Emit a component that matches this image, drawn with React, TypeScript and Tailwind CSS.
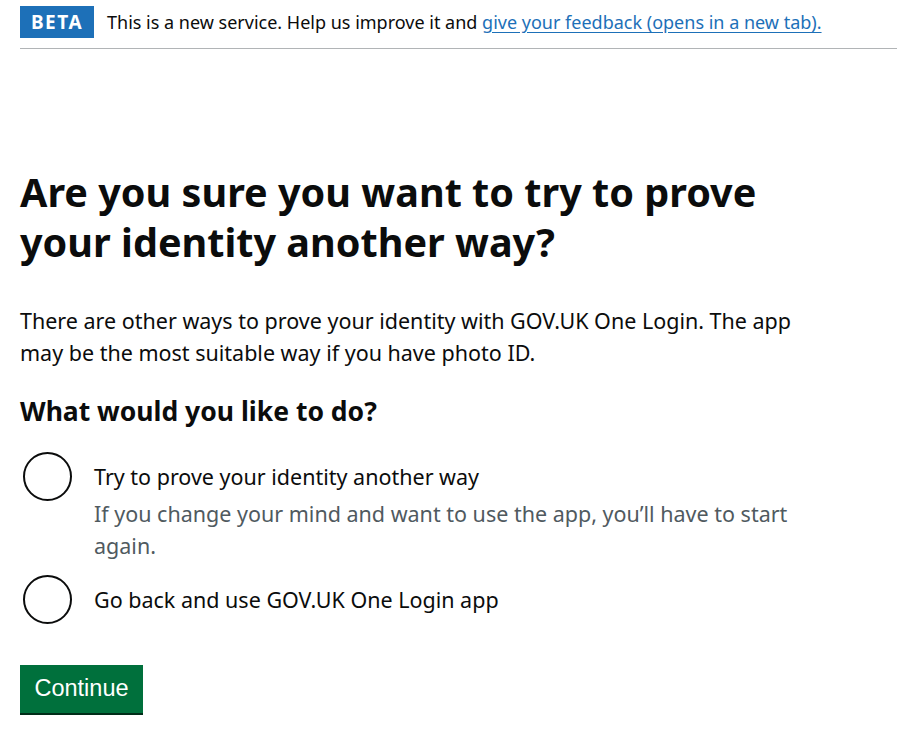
import React from 'react';

const font = { fontFamily: '"Noto Sans", Arial, sans-serif' };

function Radio({ label, hint }: { label: string; hint?: string }) {
  return (
    <div className="flex items-start">
      <span className="ml-[3px] h-[49px] w-[49px] shrink-0 rounded-full border-2 border-[#0b0c0c] bg-white" />
      <div className="ml-[22px] max-w-[700px] pt-[10px]">
        <div className="text-[21.5px] leading-[30px] text-[#0b0c0c]">{label}</div>
        {hint && <div className="mt-[6px] text-[21.5px] leading-[32px] text-[#505a5f]">{hint}</div>}
      </div>
    </div>
  );
}

export default function App() {
  return (
    <div className="min-h-[731px] bg-white text-[#0b0c0c]" style={font}>
      {/* Phase banner */}
      <div className="ml-[20px] flex items-center gap-[13px] border-b border-[#b1b4b6] pt-[6px] pb-[10px]">
        <strong className="flex h-[32px] w-[74px] items-center justify-center bg-[#1d70b8] text-[19px] font-bold tracking-[1.5px] text-white">
          BETA
        </strong>
        <p className="text-[18px] leading-[24px]">
          This is a new service. Help us improve it and{' '}
          <a href="#" className="text-[#1d70b8] underline underline-offset-[3px]">
            give your feedback (opens in a new tab).
          </a>
        </p>
      </div>

      <main className="px-[20px] pt-[118px]">
        <h1 className="max-w-[780px] text-[39.6px] font-bold leading-[50px]">
          Are you sure you want to try to prove your identity another way?
        </h1>
        <p className="mt-[38px] max-w-[800px] text-[21.5px] leading-[32px]">
          There are other ways to prove your identity with GOV.UK One Login. The app may be the most suitable way if
          you have photo ID.
        </p>

        <fieldset className="mt-[24px]">
          <legend className="text-[26.5px] font-bold leading-[36px]">What would you like to do?</legend>
          <div className="mt-[23px] flex flex-col gap-[13px]">
            <Radio
              label="Try to prove your identity another way"
              hint="If you change your mind and want to use the app, you’ll have to start again."
            />
            <Radio label="Go back and use GOV.UK One Login app" />
          </div>
        </fieldset>

        <button
          className="mt-[41px] block h-[48px] w-[123px] bg-[#00703c] text-[23.5px] text-white shadow-[0_2px_0_#002d18]"
          style={{ fontFamily: '"Liberation Sans", Arial, sans-serif' }}
        >
          Continue
        </button>
      </main>
    </div>
  );
}
